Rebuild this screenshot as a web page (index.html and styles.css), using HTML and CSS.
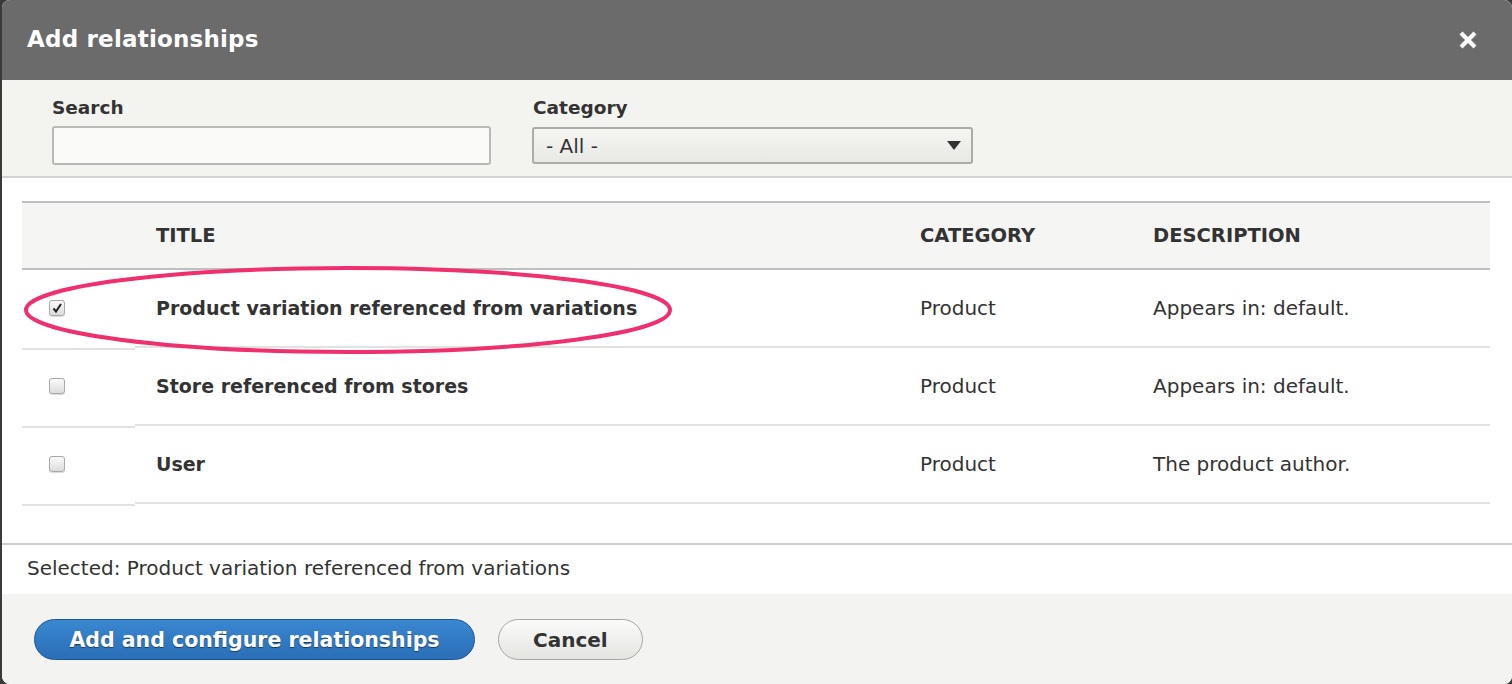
FILE: index.html
```html
<!DOCTYPE html>
<html>
<head>
<meta charset="utf-8">
<link rel="stylesheet" href="styles.css">
</head>
<body>
<div class="dialog">
  <div class="titlebar">
    <span class="title">Add relationships</span>
    <button class="close" aria-label="Close">
      <svg width="20" height="20" viewBox="0 0 20 20"><path d="M3 3 L17 17 M17 3 L3 17" stroke="#fff" stroke-width="4.2" stroke-linecap="butt"/></svg>
    </button>
  </div>
  <div class="filters">
    <div class="field search">
      <label class="flabel">Search</label>
      <div class="input"></div>
    </div>
    <div class="field cat">
      <label class="flabel">Category</label>
      <div class="select"><span>- All -</span><span class="arrow"></span></div>
    </div>
  </div>
  <div class="content">
    <table class="list">
      <thead>
        <tr><th class="cb"></th><th class="t">Title</th><th class="c">Category</th><th class="d">Description</th></tr>
      </thead>
      <tbody>
        <tr>
          <td class="cb"><span class="box checked"><svg width="12" height="12" viewBox="0 0 12 12"><path d="M2.5 6.5 L5 9.5 L10 2" fill="none" stroke="#222" stroke-width="2"/></svg></span></td>
          <td class="t">Product variation referenced from variations</td>
          <td class="c">Product</td>
          <td class="d">Appears in: default.</td>
        </tr>
        <tr>
          <td class="cb"><span class="box"></span></td>
          <td class="t">Store referenced from stores</td>
          <td class="c">Product</td>
          <td class="d">Appears in: default.</td>
        </tr>
        <tr>
          <td class="cb"><span class="box"></span></td>
          <td class="t">User</td>
          <td class="c">Product</td>
          <td class="d">The product author.</td>
        </tr>
      </tbody>
    </table>
    <svg class="ring" width="652" height="92" viewBox="0 0 652 92"><ellipse cx="326" cy="46" rx="322" ry="42" fill="none" stroke="#f0306e" stroke-width="4"/></svg>
  </div>
  <div class="selected">Selected: Product variation referenced from variations</div>
  <div class="buttons">
    <button class="btn primary">Add and configure relationships</button>
    <button class="btn">Cancel</button>
  </div>
</div>
</body>
</html>
```
FILE: styles.css
```css
html, body {
  margin: 0;
  padding: 0;
  height: 684px;
  overflow: hidden;
  background: #3a3a3a;
}
body {
  font-family: "DejaVu Sans", Verdana, sans-serif;
  color: #333;
}
.dialog {
  margin-left: 2px;
  height: 684px;
  background: #fff;
  border-radius: 8px;
  overflow: hidden;
  display: flex;
  flex-direction: column;
}
.titlebar {
  height: 80px;
  flex: none;
  background: #6b6b6b;
  display: flex;
  align-items: center;
  justify-content: space-between;
  padding: 0 34px 0 25px;
}
.title {
  color: #fff;
  font-weight: bold;
  font-size: 23px;
  letter-spacing: 0.2px;
  margin-top: -2px;
}
.close {
  background: none;
  border: 0;
  padding: 0;
  width: 20px;
  height: 20px;
  display: flex;
}
.filters {
  flex: none;
  height: 98px;
  box-sizing: border-box;
  background: #f3f3f0;
  border-bottom: 2px solid #d2d2ce;
  display: flex;
  gap: 41px;
  padding: 16px 0 0 50px;
}
.field { display: flex; flex-direction: column; }
.flabel {
  font-weight: bold;
  font-size: 18.5px;
  line-height: 24px;
  margin-bottom: 6px;
  color: #333;
}
.input {
  width: 439px;
  height: 39px;
  box-sizing: border-box;
  border: 2px solid #b9b9b6;
  border-radius: 3px;
  background: #fafaf9;
}
.cat .flabel { margin-left: 1px; }
.select {
  width: 441px;
  height: 37px;
  margin-top: 1px;
  box-sizing: border-box;
  border: 2px solid #ababa8;
  border-radius: 3px;
  background: linear-gradient(#f5f5f2, #e8e8e5);
  display: flex;
  align-items: center;
  justify-content: space-between;
  padding: 0 10px 0 12px;
  font-size: 20px;
  color: #333;
}
.arrow {
  width: 0;
  height: 0;
  border-left: 7px solid transparent;
  border-right: 7px solid transparent;
  border-top: 9px solid #333;
}
.content {
  position: relative;
  flex: 1;
  padding: 23px 22px 0 20px;
  border-bottom: 2px solid #cdcdcd;
}
.list {
  width: 100%;
  border-collapse: collapse;
  font-size: 20px;
}
.list th {
  height: 67px;
  box-sizing: border-box;
  background: #f5f5f3;
  border-top: 2px solid #bfbfbf;
  border-bottom: 2px solid #bfbfbf;
  text-align: left;
  text-transform: uppercase;
  font-weight: bold;
  font-size: 19.5px;
  padding: 0 0 0 21px;
}
.list td {
  height: 78px;
  box-sizing: border-box;
  border-bottom: 2px solid #e2e2df;
  padding: 0 0 0 21px;
  vertical-align: middle;
  position: relative;
}
.list td.t { font-weight: bold; font-size: 19px; }
.list .cb { width: 113px; padding: 0 0 0 27px; box-sizing: border-box; }
.list td.cb { border-bottom-color: transparent; }
.list td.cb::after {
  content: "";
  position: absolute;
  left: 0;
  right: 0;
  bottom: -4px;
  height: 2px;
  background: #e2e2df;
}
.list .c { width: 233px; }
.list .d { width: 358px; }
.box {
  display: block;
  width: 16px;
  height: 16px;
  box-sizing: border-box;
  border: 1px solid #a9a9a9;
  border-radius: 3px;
  background: linear-gradient(#fafafa, #dcdcdc);
  box-shadow: 0 1px 1px rgba(0,0,0,0.15);
  position: relative;
}
.box svg { position: absolute; left: 1px; top: 1px; }
.ring {
  position: absolute;
  left: 20px;
  top: 86px;
}
.selected {
  flex: none;
  height: 49px;
  box-sizing: border-box;
  padding: 11px 0 0 25px;
  font-size: 20px;
  color: #333;
}
.buttons {
  flex: none;
  height: 90px;
  box-sizing: border-box;
  background: #f3f3f1;
  padding: 25px 0 0 32px;
  display: flex;
  gap: 23px;
  align-items: flex-start;
}
.btn {
  height: 41px;
  border-radius: 21px;
  font-family: inherit;
  font-size: 20px;
  font-weight: bold;
  padding: 0 34px;
  border: 1px solid #a6a6a6;
  background: linear-gradient(#fbfbfa, #e4e4e1);
  color: #333;
}
.btn.primary {
  width: 441px;
  padding: 0;
  font-size: 20.5px;
  background: linear-gradient(#3a87d0, #2a6fb8);
  border: 1px solid #1e5596;
  color: #fff;
  text-shadow: 0 1px 1px rgba(0,0,0,0.5);
}
```
